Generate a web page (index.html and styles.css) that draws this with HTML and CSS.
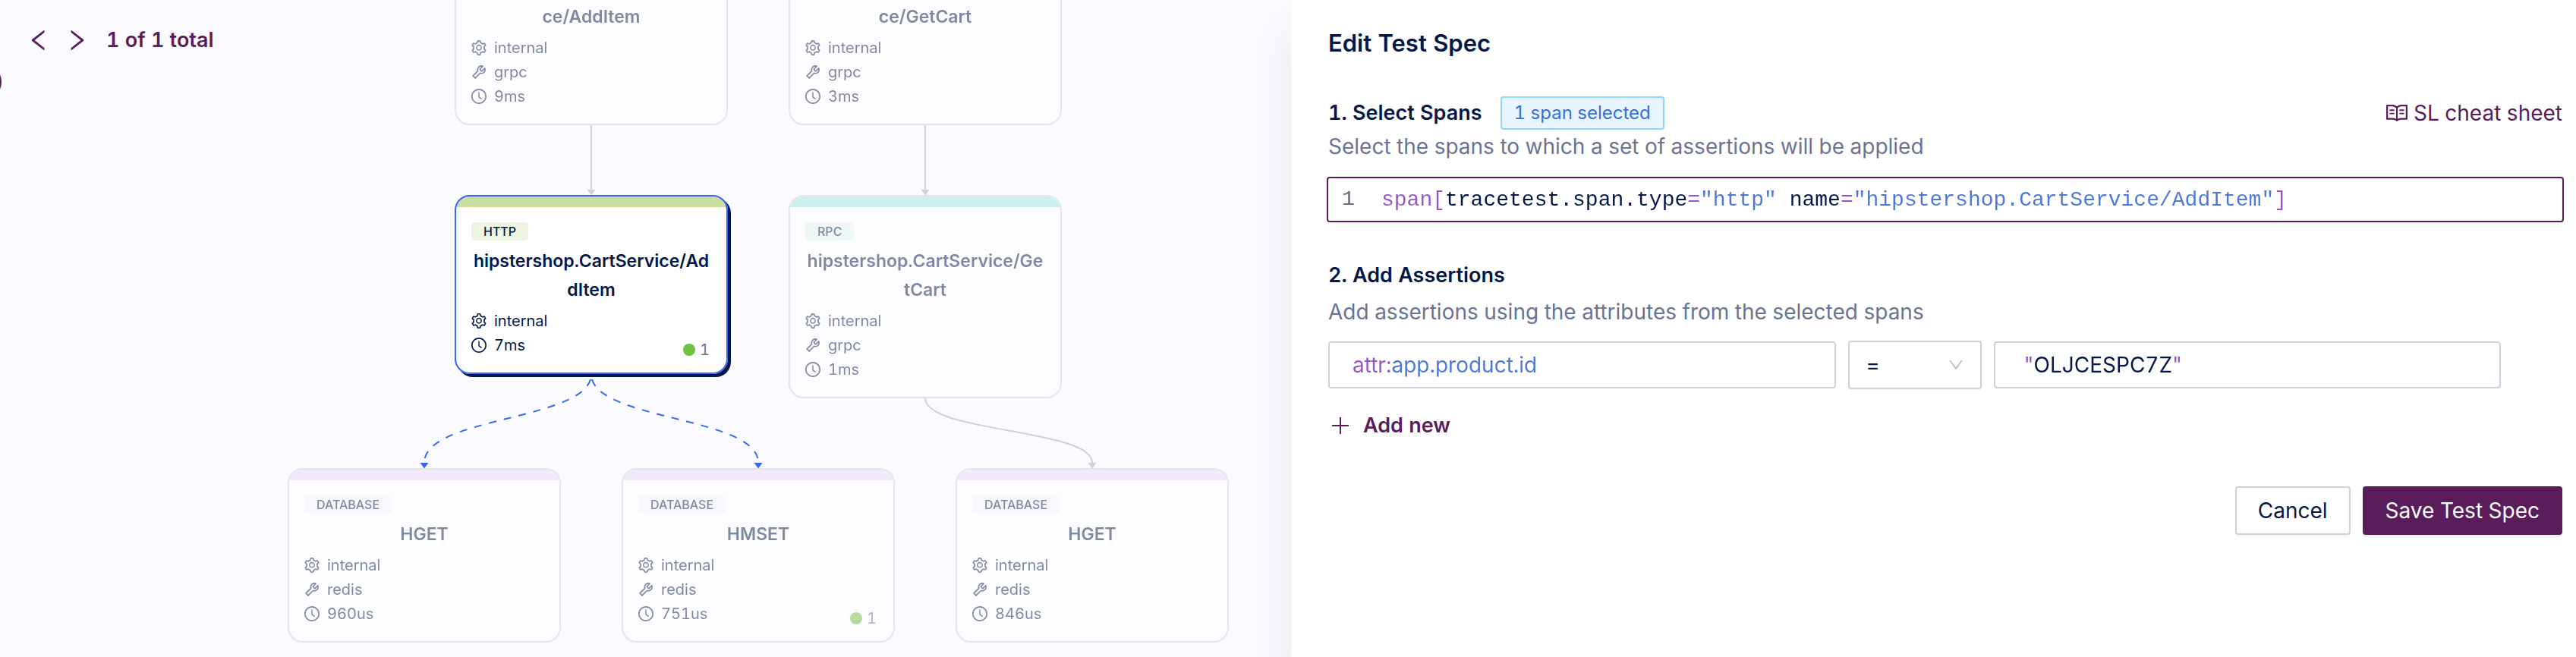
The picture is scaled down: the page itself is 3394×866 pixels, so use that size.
FILE: index.html
```html
<!DOCTYPE html>
<html lang="en">
<head>
<meta charset="utf-8">
<meta name="viewport" content="width=device-width, initial-scale=1">
<title>Edit Test Spec</title>
<link rel="stylesheet" href="styles.css">
</head>
<body>
<svg class="sprite" aria-hidden="true">
  <symbol id="gear" viewBox="64 64 896 896"><path d="M924.8 625.7l-65.5-56c3.1-19 4.7-38.4 4.7-57.8s-1.6-38.8-4.7-57.8l65.5-56a32.03 32.03 0 009.3-35.2l-.9-2.6a443.74 443.74 0 00-79.7-137.9l-1.8-2.1a32.12 32.12 0 00-35.1-9.5l-81.3 28.9c-30-24.6-63.5-44-99.7-57.6l-15.7-85a32.05 32.05 0 00-25.8-25.7l-2.7-.5c-52.1-9.4-106.9-9.4-159 0l-2.7.5a32.05 32.05 0 00-25.8 25.7l-15.8 85.4a351.86 351.86 0 00-99 57.4l-81.9-29.1a32 32 0 00-35.1 9.5l-1.8 2.1a446.02 446.02 0 00-79.7 137.9l-.9 2.6c-4.5 12.5-.8 26.5 9.3 35.2l66.3 56.6c-3.1 18.8-4.6 38-4.6 57.1 0 19.2 1.5 38.4 4.6 57.1L99 625.5a32.03 32.03 0 00-9.3 35.2l.9 2.6c18.1 50.4 44.9 96.9 79.7 137.9l1.8 2.1a32.12 32.12 0 0035.1 9.5l81.9-29.1c29.8 24.5 63.1 43.9 99 57.4l15.8 85.4a32.05 32.05 0 0025.8 25.7l2.7.5a449.4 449.4 0 00159 0l2.7-.5a32.05 32.05 0 0025.8-25.7l15.7-85a350 350 0 0099.7-57.6l81.3 28.9a32 32 0 0035.1-9.5l1.8-2.1c34.8-41.1 61.6-87.5 79.7-137.9l.9-2.6c4.5-12.3.8-26.3-9.3-35zM788.3 465.9c2.5 15.1 3.8 30.6 3.8 46.1s-1.3 31-3.8 46.1l-6.6 40.1 74.7 63.9a370.03 370.03 0 01-42.6 73.6L721 702.8l-31.4 25.8c-23.9 19.6-50.5 35-79.3 45.8l-38.1 14.3-17.9 97a377.5 377.5 0 01-85 0l-17.9-97.2-37.8-14.5c-28.5-10.8-55-26.2-78.7-45.7l-31.4-25.9-93.4 33.2c-17-22.9-31.2-47.6-42.6-73.6l75.5-64.5-6.5-40c-2.4-14.9-3.7-30.3-3.7-45.5 0-15.3 1.2-30.6 3.7-45.5l6.5-40-75.5-64.5c11.3-26.1 25.6-50.7 42.6-73.6l93.4 33.2 31.4-25.9c23.7-19.5 50.2-34.9 78.7-45.7l37.9-14.3 17.9-97.2c28.1-3.2 56.8-3.2 85 0l17.9 97 38.1 14.3c28.7 10.8 55.4 26.2 79.3 45.8l31.4 25.8 92.8-32.9c17 22.9 31.2 47.6 42.6 73.6L781.8 426l6.5 39.9zM512 326c-97.2 0-176 78.8-176 176s78.8 176 176 176 176-78.8 176-176-78.8-176-176-176zm79.2 255.2A111.6 111.6 0 01512 614c-29.9 0-58-11.7-79.2-32.8A111.6 111.6 0 01400 502c0-29.9 11.7-58 32.8-79.2C454 401.6 482.1 390 512 390c29.9 0 58 11.6 79.2 32.8A111.6 111.6 0 01624 502c0 29.9-11.7 58-32.8 79.2z"/></symbol>
  <symbol id="tool" viewBox="64 64 896 896"><path d="M876.6 239.5c-.5-.9-1.2-1.8-2-2.5-5-5-13.1-5-18.1 0L684.2 409.3l-67.9-67.9L788.7 169c.8-.8 1.4-1.6 2-2.5 3.6-6.1 1.6-13.9-4.5-17.5-98.2-58-226.8-44.7-311.3 39.7-67 67-89.2 162-66.5 247.4l-293 293c-3 3-2.8 7.9.3 11l169.7 169.7c3.1 3.1 8.1 3.3 11 .3l292.9-292.9c85.5 22.8 180.5.7 247.6-66.4 84.4-84.5 97.7-213.1 39.7-311.3zM786 499.8c-58.1 58.1-145.3 69.3-214.6 33.6l-8.8 8.8-.1-.1-274 274.1-79.2-79.2 230.1-230.1s0 .1.1.1l52.8-52.8c-35.7-69.3-24.5-156.5 33.6-214.6a184.2 184.2 0 01144-53.5L537 318.9a32.05 32.05 0 000 45.3l124.5 124.5a32.05 32.05 0 0045.3 0l132.8-132.8c3.7 51.8-14.4 104.8-53.6 143.9z"/></symbol>
  <symbol id="clock" viewBox="64 64 896 896"><path d="M512 64C264.6 64 64 264.6 64 512s200.600 448 448 448 448-200.600 448-448S759.400 64 512 64zm0 820c-205.400 0-372-166.600-372-372s166.600-372 372-372 372 166.600 372 372-166.600 372-372 372z"/><path d="M686.700 638.600L544.100 535.500V288c0-4.400-3.600-8-8-8H488c-4.400 0-8 3.600-8 8v275.400c0 2.600 1.200 5 3.300 6.500l165.400 120.600c3.600 2.600 8.600 1.800 11.200-1.700l28.600-39c2.600-3.700 1.800-8.700-1.800-11.200z"/></symbol>
</svg>

<main class="layout">
  <section class="graph" aria-label="Trace graph">
    <svg class="edges" aria-hidden="true">
      <defs>
        <marker id="tip" markerUnits="userSpaceOnUse" markerWidth="12" markerHeight="8" refX="6" refY="0" viewBox="0 0 12 8"><path class="tip" d="M0.500 0H11.500L6 7.500Z"/></marker>
        <marker id="tip-on" markerUnits="userSpaceOnUse" markerWidth="12" markerHeight="8" refX="6" refY="0" viewBox="0 0 12 8"><path class="tip-on" d="M0.500 0H11.500L6 7.500Z"/></marker>
      </defs>
      <path class="edge" marker-end="url(#tip)" d="M779 165V250"/>
      <path class="edge" marker-end="url(#tip)" d="M1219 165V250"/>
      <path class="edge" marker-end="url(#tip)" d="M1219 525C1219 570 1439 565 1439 610"/>
      <path class="edge edge-on" marker-end="url(#tip-on)" d="M779 493C779 555 559 548 559 610"/>
      <path class="edge edge-on" marker-end="url(#tip-on)" d="M779 493C779 555 999 548 999 610"/>
    </svg>

    <div class="handle"></div>
    <nav class="pager" aria-label="Matched spans">
      <button class="pager-btn" type="button" aria-label="Previous"><svg viewBox="0 0 1024 1024"><path d="M724 218.300V141c0-6.700-7.700-10.400-12.900-6.300L260.300 486.800a31.860 31.860 0 000 50.300l450.800 352.100c5.300 4.100 12.900.4 12.900-6.300v-77.300c0-4.900-2.300-9.600-6.100-12.600l-360-281 360-281.100c3.800-3 6.100-7.700 6.100-12.600z"/></svg></button>
      <button class="pager-btn" type="button" aria-label="Next"><svg viewBox="0 0 1024 1024"><path d="M765.700 486.800L314.900 134.700A7.970 7.970 0 00302 141v77.300c0 4.900 2.300 9.600 6.100 12.600l360 281.100-360 281.100c-3.900 3-6.100 7.700-6.100 12.600V883c0 6.700 7.700 10.400 12.900 6.300l450.800-352.100a31.960 31.960 0 000-50.400z"/></svg></button>
      <span class="pager-text">1 of 1 total</span>
    </nav>

    <article class="node node-add-parent dim">
      <h3 class="node-title">ce/AddItem</h3>
      <ul class="meta">
        <li><svg><use href="#gear"/></svg>internal</li>
        <li><svg><use href="#tool"/></svg>grpc</li>
        <li><svg><use href="#clock"/></svg>9ms</li>
      </ul>
    </article>
    <article class="node node-get-parent dim">
      <h3 class="node-title">ce/GetCart</h3>
      <ul class="meta">
        <li><svg><use href="#gear"/></svg>internal</li>
        <li><svg><use href="#tool"/></svg>grpc</li>
        <li><svg><use href="#clock"/></svg>3ms</li>
      </ul>
    </article>

    <article class="node node-add http selected">
      <span class="badge">HTTP</span>
      <h3 class="node-title">hipstershop.CartService/AddItem</h3>
      <ul class="meta">
        <li><svg><use href="#gear"/></svg>internal</li>
        <li><svg><use href="#clock"/></svg>7ms</li>
      </ul>
      <span class="passed">1</span>
    </article>
    <article class="node node-get rpc dim">
      <span class="badge">RPC</span>
      <h3 class="node-title">hipstershop.CartService/GetCart</h3>
      <ul class="meta">
        <li><svg><use href="#gear"/></svg>internal</li>
        <li><svg><use href="#tool"/></svg>grpc</li>
        <li><svg><use href="#clock"/></svg>1ms</li>
      </ul>
    </article>

    <article class="node node-hget database dim">
      <span class="badge">DATABASE</span>
      <h3 class="node-title">HGET</h3>
      <ul class="meta">
        <li><svg><use href="#gear"/></svg>internal</li>
        <li><svg><use href="#tool"/></svg>redis</li>
        <li><svg><use href="#clock"/></svg>960us</li>
      </ul>
    </article>
    <article class="node node-hmset database dim">
      <span class="badge">DATABASE</span>
      <h3 class="node-title">HMSET</h3>
      <ul class="meta">
        <li><svg><use href="#gear"/></svg>internal</li>
        <li><svg><use href="#tool"/></svg>redis</li>
        <li><svg><use href="#clock"/></svg>751us</li>
      </ul>
      <span class="passed">1</span>
    </article>
    <article class="node node-hget-cart database dim">
      <span class="badge">DATABASE</span>
      <h3 class="node-title">HGET</h3>
      <ul class="meta">
        <li><svg><use href="#gear"/></svg>internal</li>
        <li><svg><use href="#tool"/></svg>redis</li>
        <li><svg><use href="#clock"/></svg>846us</li>
      </ul>
    </article>
  </section>

  <form class="panel">
    <h1 class="panel-title">Edit Test Spec</h1>

    <section class="step">
      <header class="step-head">
        <h2 class="step-title"><label for="selector">1. Select Spans</label></h2>
        <span class="tag">1 span selected</span>
        <a class="cheat" href="#cheat-sheet"><svg viewBox="0 0 1024 1024" aria-hidden="true"><path d="M928 161H699.200c-49.100 0-97.100 14.100-138.400 40.700L512 233l-48.800-31.300A255.200 255.200 0 00324.800 161H96c-17.700 0-32 14.300-32 32v568c0 17.700 14.300 32 32 32h228.800c49.100 0 97.100 14.100 138.400 40.700l44.400 28.600c1.300.8 2.800 1.300 4.300 1.300s3-.4 4.300-1.300l44.400-28.600C602 807.100 650.100 793 699.200 793H928c17.700 0 32-14.300 32-32V193c0-17.700-14.300-32-32-32zM324.800 721H136V233h188.800c35.400 0 69.800 10.100 99.500 29.200l48.800 31.300 6.900 4.500v462c-47.600-25.600-100.800-39-155.200-39zm563.200 0H699.200c-54.400 0-107.600 13.400-155.200 39V298l6.900-4.500 48.800-31.300c29.700-19.100 64.100-29.200 99.500-29.200H888v488zM396.900 361H211.100c-3.900 0-7.100 3.400-7.100 7.500v45c0 4.100 3.200 7.500 7.100 7.500h185.700c3.900 0 7.100-3.400 7.100-7.500v-45c.1-4.100-3.100-7.500-7-7.500zm223.100 7.500v45c0 4.100 3.200 7.500 7.100 7.500h185.700c3.900 0 7.100-3.400 7.100-7.500v-45c0-4.100-3.200-7.500-7.100-7.500H627.100c-3.900 0-7.100 3.400-7.100 7.500zM396.900 501H211.100c-3.900 0-7.100 3.400-7.100 7.500v45c0 4.100 3.200 7.500 7.100 7.500h185.700c3.900 0 7.100-3.400 7.100-7.500v-45c.1-4.100-3.100-7.500-7-7.500zm416 0H627.100c-3.900 0-7.100 3.400-7.100 7.500v45c0 4.100 3.200 7.500 7.100 7.500h185.700c3.900 0 7.100-3.400 7.100-7.500v-45c.1-4.100-3.100-7.500-7-7.500z"/></svg>SL cheat sheet</a>
      </header>
      <p class="hint">Select the spans to which a set of assertions will be applied</p>
      <div class="editor">
        <span class="line-no">1</span>
        <input class="code" id="selector" type="text" spellcheck="false" value='span[tracetest.span.type="http" name="hipstershop.CartService/AddItem"]'>
      </div>
    </section>

    <section class="step">
      <h2 class="step-title">2. Add Assertions</h2>
      <p class="hint hint-assert">Add assertions using the attributes from the selected spans</p>
      <div class="assertion">
        <input class="field field-attr" type="text" aria-label="Attribute" spellcheck="false" value="attr:app.product.id">
        <div class="operator">
          <select class="operator-select" aria-label="Operator"><option>=</option></select>
          <svg class="chevron" viewBox="0 0 1024 1024" aria-hidden="true"><path d="M884 256h-75c-5.100 0-9.900 2.500-12.900 6.600L512 654.200 227.900 262.600c-3-4.100-7.800-6.600-12.900-6.600h-75c-6.500 0-10.300 7.400-6.500 12.700l352.600 486.100c12.800 17.600 39 17.600 51.700 0l352.600-486.100c3.900-5.300.1-12.700-6.400-12.700z"/></svg>
        </div>
        <input class="field field-value" type="text" aria-label="Expected value" spellcheck="false" value='"OLJCESPC7Z"'>
      </div>
      <button class="add" type="button"><svg viewBox="0 0 24 24" aria-hidden="true"><path d="M11 1h2v10h10v2H13v10h-2V13H1v-2h10z"/></svg>Add new</button>
    </section>

    <footer class="actions">
      <button class="btn" type="button">Cancel</button>
      <button class="btn btn-primary" type="submit">Save Test Spec</button>
    </footer>
  </form>
</main>
</body>
</html>
```

FILE: styles.css
```css
:root {
  --navy: #031849;
  --muted: #687492;
  --plum: #5b1c5b;
  --line: #cdd1db;
  --canvas: #fbfaff;
  --blue: #3567f6;
  --keyword: #9754c9;
  --string: #4b78d8;
}

* { box-sizing: border-box; }

body {
  margin: 0;
  color: var(--navy);
  background: #fff;
  font: 400 28px/44px Inter, "Liberation Sans", sans-serif;
  font-variant-numeric: tabular-nums;
}

h1, h2, h3, p, ul { margin: 0; padding: 0; }
h1, h2, h3 { font-weight: 600; }
ul { list-style: none; }
button, input, select { font: inherit; color: inherit; margin: 0; }
button { cursor: pointer; }
svg { display: block; fill: currentColor; }
.sprite { position: absolute; width: 0; height: 0; }

.layout {
  display: grid;
  grid-template-columns: 1701fr 1693fr;
  min-height: 100vh;
}

/* Graph canvas */
.graph {
  position: relative;
  overflow: hidden;
  background: var(--canvas);
}
.edges { position: absolute; inset: 0; width: 100%; height: 100%; }
.edge { fill: none; stroke: var(--line); stroke-width: 2; }
.edge-on { stroke: var(--blue); stroke-dasharray: 10 10; stroke-dashoffset: -7; }
.tip { fill: var(--line); }
.tip-on { fill: var(--blue); }

.handle {
  position: absolute;
  left: -46px;
  top: 84px;
  width: 48px;
  height: 48px;
  border: 2px solid var(--plum);
  border-radius: 50%;
}

.pager {
  position: absolute;
  left: 32px;
  top: 31px;
  display: flex;
  align-items: center;
  gap: 12px;
  color: var(--plum);
}
.pager-btn { padding: 0; border: 0; background: none; color: inherit; }
.pager-btn svg { width: 38px; height: 36px; }
.pager-text { padding-left: 8px; font-size: 27px; font-weight: 600; }

.node {
  position: absolute;
  width: 360px;
  padding: 20px;
  border: 2px solid var(--line);
  border-radius: 20px;
  background: #fff;
}
.dim { opacity: 0.5; }
.http, .rpc, .database { padding-top: 34px; }
.http { background: linear-gradient(#c9df9f 14px, #fff 14px) padding-box; }
.rpc { background: linear-gradient(#9fe8dd 14px, #fff 14px) padding-box; }
.database { background: linear-gradient(#ebdafb 14px, #fff 14px) padding-box; }
.selected { border-color: var(--blue); box-shadow: 4px 4px 0 var(--navy); }

.node-add-parent { left: 599px; top: -19px; }
.node-get-parent { left: 1039px; top: -19px; }
.node-add { left: 599px; top: 257px; }
.node-get { left: 1039px; top: 257px; }
.node-hget { left: 379px; top: 617px; }
.node-hmset { left: 819px; top: 617px; }
.node-hget-cart { left: 1259px; top: 617px; }

.badge {
  display: block;
  width: fit-content;
  margin-bottom: 8px;
  padding: 0 16px;
  border-radius: 4px;
  font-size: 16px;
  line-height: 24px;
  font-weight: 500;
}
.http .badge { background: #edf5e1; }
.rpc .badge { background: #e1f8f1; }
.database .badge { background: #f7f6fd; }

.node-title {
  margin-bottom: 6px;
  font-size: 23px;
  line-height: 38px;
  text-align: center;
  word-break: break-all;
}
.meta li {
  display: flex;
  align-items: center;
  gap: 10px;
  font-size: 20px;
  line-height: 32px;
}
.meta svg { width: 20px; height: 20px; }

.passed {
  position: absolute;
  right: 22px;
  bottom: 18px;
  display: flex;
  align-items: center;
  gap: 6px;
  font-size: 20px;
  line-height: 24px;
  color: var(--muted);
}
.passed::before {
  content: "";
  width: 16px;
  height: 16px;
  border-radius: 50%;
  background: #70c041;
}

/* Spec form */
.panel {
  position: relative;
  padding: 35px 18px 35px 49px;
  background: #fff;
  box-shadow: 0 40px 60px rgba(3, 24, 73, 0.08);
}
.panel-title { font-size: 31px; margin-bottom: 48px; }
.step { margin-bottom: 50px; }
.step-head { display: flex; align-items: center; }
.step-title { font-size: 27px; }
.tag {
  margin-left: 24px;
  padding: 0 16px;
  border: 2px solid #91d5ff;
  border-radius: 4px;
  background: #e9f5fe;
  color: #3670d6;
  font-size: 24px;
  line-height: 40px;
}
.cheat {
  display: flex;
  align-items: center;
  gap: 6px;
  margin-left: auto;
  color: var(--plum);
  text-decoration: none;
}
.cheat svg { width: 32px; height: 32px; }
.hint { color: var(--muted); }
.hint-assert { margin-top: 4px; }

.editor {
  display: flex;
  align-items: center;
  height: 56px;
  margin-top: 20px;
  padding-left: 18px;
  border-radius: 2px;
  box-shadow: 0 0 0 2px var(--plum);
  font-family: "Liberation Mono", monospace;
}
.line-no { width: 52px; color: #6c6c6c; }

/* Token colours are painted through the text of each input */
.code, .field {
  min-width: 0;
  border: 0;
  outline: 0;
  background-color: transparent;
  -webkit-text-fill-color: transparent;
}
.code {
  flex: 1;
  height: 56px;
  padding: 0;
  background-image: linear-gradient(90deg,
    var(--keyword) 5ch, var(--navy) 5ch 24ch,
    var(--keyword) 24ch 25ch, var(--string) 25ch 31ch,
    var(--navy) 31ch 36ch, var(--keyword) 36ch 37ch,
    var(--string) 37ch 70ch, var(--keyword) 70ch);
  -webkit-background-clip: text;
  background-clip: text;
}

.assertion {
  display: grid;
  grid-template-columns: 1fr 176px 1fr;
  align-items: center;
  gap: 16px;
  margin-top: 16px;
  padding-right: 81px;
}
.field {
  height: 62px;
  border: 2px solid var(--line);
  border-radius: 4px;
  background-origin: content-box;
  background-repeat: no-repeat;
  -webkit-background-clip: text;
  background-clip: text;
}
.field-attr {
  padding: 0 30px;
  background-image: linear-gradient(90deg, var(--keyword) 54px, var(--string) 54px);
}
.field-value {
  padding: 0 38px;
  background-image: linear-gradient(90deg,
    var(--keyword) 13px, var(--navy) 13px 194px, var(--keyword) 194px);
}
.operator { display: grid; align-items: center; }
.operator-select {
  grid-area: 1 / 1;
  appearance: none;
  width: 100%;
  height: 64px;
  padding: 0 22px;
  border: 2px solid var(--line);
  border-radius: 4px;
  background: #fff;
}
.chevron {
  grid-area: 1 / 1;
  justify-self: end;
  width: 24px;
  height: 24px;
  margin-right: 22px;
  fill: #bfbfbf;
  pointer-events: none;
}

.add {
  display: flex;
  align-items: center;
  gap: 18px;
  margin-top: 26px;
  padding: 0 0 0 4px;
  border: 0;
  background: none;
  color: var(--plum);
  font-size: 27px;
  font-weight: 600;
}
.add svg { width: 24px; height: 24px; }

.actions { display: flex; justify-content: flex-end; gap: 16px; margin-top: 58px; }
.btn {
  height: 64px;
  padding: 0 28px;
  border: 2px solid var(--line);
  border-radius: 4px;
  background: #fff;
  box-shadow: 0 4px 0 rgba(0, 0, 0, 0.02);
}
.btn-primary {
  border-color: var(--plum);
  background: var(--plum);
  color: #fff;
  box-shadow: 0 4px 0 rgba(0, 0, 0, 0.04);
}
```
